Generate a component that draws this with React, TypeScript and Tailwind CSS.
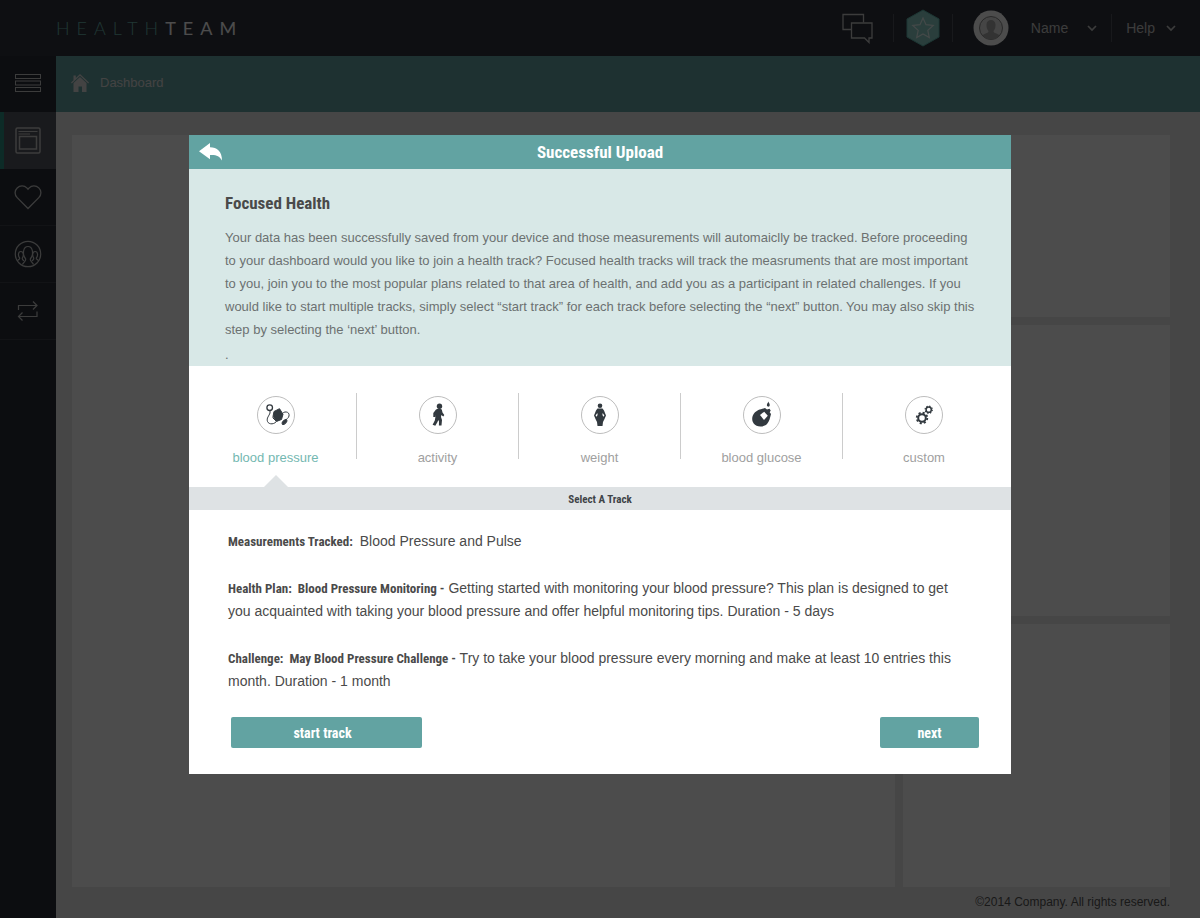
import React from 'react';

const condensed = "font-['Liberation_Sans_Narrow','Roboto_Condensed','Arial_Narrow','Liberation_Sans',sans-serif] font-bold";

const MenuIcon = () => (
  <svg width="26" height="19" viewBox="0 0 26 19" fill="none" stroke="currentColor">
    <rect x="0.5" y="0.5" width="25" height="4" />
    <rect x="0.5" y="7" width="25" height="4" />
    <rect x="0.5" y="13.5" width="25" height="4" />
  </svg>
);

const WindowIcon = () => (
  <svg width="26" height="27" viewBox="0 0 26 27" fill="none" stroke="currentColor">
    <rect x="1" y="1" width="24" height="25" rx="1.5" strokeWidth="1.5" />
    <path d="M3.5 4.5H22.5M3.5 7H15" />
    <rect x="4.5" y="9.5" width="17" height="12.5" strokeWidth="1.5" />
  </svg>
);

const HeartIcon = () => (
  <svg width="28" height="26" viewBox="0 0 28 26" fill="none" stroke="currentColor" strokeWidth="1.3">
    <path d="M14 24.5 3.2 13.6C.4 10.800.4 6.500 3.200 3.900 5.900 1.300 10.300 1.300 12.800 3.900L14 5.200 15.200 3.900C17.700 1.300 22.100 1.300 24.800 3.900 27.600 6.500 27.600 10.800 24.800 13.600Z" />
  </svg>
);

const PeopleIcon = () => (
  <svg width="28" height="28" viewBox="0 0 28 28" fill="none" stroke="currentColor" strokeWidth="1.200">
    <circle cx="14" cy="14" r="12.700" />
    <path d="M8.500 24.500C9.500 22 12 21.500 11.700 19 9.500 16.500 9.200 13 9.700 10.500 10.300 7.500 12 6.500 14 6.500S17.700 7.500 18.300 10.500C18.800 13 18.500 16.500 16.300 19 16 21.500 18.500 22 19.500 24.500" />
    <path d="M3.500 21C4 19.500 6 19.500 5.700 18 3.800 16 4 11.500 6.800 11.500 10 11.500 9.800 16 8.300 18 8 20 9.500 20 10 21M24.500 21C24 19.500 22 19.500 22.300 18 24.200 16 24 11.500 21.200 11.500 18 11.500 18.200 16 19.700 18 20 20 18.500 20 18 21" />
  </svg>
);

const RepeatIcon = () => (
  <svg width="22" height="22" viewBox="0 0 22 22" fill="none" stroke="currentColor" strokeWidth="1.200">
    <path d="M1.500 10V5.500H20M16 1.500 20 5.500 16 9.500M20 11.500V16.500H1.500M5.500 12.500 1.500 16.500 5.500 20.500" />
  </svg>
);

const ChatIcon = () => (
  <svg width="31" height="31" viewBox="0 0 31 31" fill="none" stroke="currentColor" strokeWidth="1.300">
    <path d="M9.500 16.500H1V1.500H21.500V9.500" />
    <path d="M9.500 10H30V25H27V29.500L22.500 25H9.500Z" />
  </svg>
);

const BadgeIcon = () => (
  <svg width="34" height="38" viewBox="0 0 34 38">
    <path d="M17 1 33 10V28L17 37 1 28V10Z" fill="#8ccfca" stroke="#5fb5ac" />
    <path d="m17 9 3 6.700 7.200.800-5.400 4.900 1.500 7.100L17 25l-6.300 3.500 1.500-7.100-5.400-4.900 7.200-.800Z" fill="none" stroke="#e4f4f2" strokeWidth="1.200" />
  </svg>
);

const Avatar = () => (
  <svg width="36" height="36" viewBox="0 0 36 36">
    <circle cx="18" cy="18" r="17.500" fill="#fff" />
    <circle cx="18" cy="18" r="11.500" fill="#e6e6e6" stroke="#8a8a8a" />
    <path d="M9.500 25.500C11 23.300 15.700 23.500 15.500 21 13.700 19.200 13.400 16.500 13.500 14.500 13.700 11.500 15.500 10 18 10S22.300 11.500 22.500 14.500C22.600 16.500 22.300 19.200 20.500 21 20.300 23.500 25 23.300 26.500 25.500A11 11 0 0 1 9.500 25.500Z" fill="#aaa" />
  </svg>
);

const Chevron = () => (
  <svg width="10" height="7" viewBox="0 0 10 7" fill="none" stroke="currentColor" strokeWidth="1.700">
    <path d="m1 1 4 4 4-4" />
  </svg>
);

const HomeIcon = () => (
  <svg width="18" height="18" viewBox="0 0 18 18" fill="currentColor">
    <path d="M9 0 18 8.600 17.200 9.400 9 1.700.8 9.400 0 8.600 2.500 6.200V1.500H4.800V4Z" />
    <path d="m9 2.900 6.500 6.100V18H11V12.500H7.500V18H2.500V9Z" />
  </svg>
);

const BackIcon = () => (
  <svg width="24" height="18" viewBox="0 0 24 18" fill="currentColor">
    <path d="M0 8.200 11 0V4.300C18 4.300 23 8.500 23 17.500 20.500 12.800 17 11.600 11 12V16.300Z" />
  </svg>
);

const PressureIcon = () => (
  <g fill="none" stroke="#32393f" strokeWidth="1">
    <circle cx="12.700" cy="11.700" r="2.800" strokeWidth="1.300" />
    <path d="M13 14.500V17C12 20 9.300 22 10.500 25.500 12 29 18 28.500 20 24.500M25 18.500C26 14.800 33 15 32 20 31.500 22.500 29.500 22.500 28.500 24.500" />
    <path d="m17 15.500 5.500-2.800 3.500 5.500-1.500 5.300-4.500 1.700-4-4.700Z" fill="#32393f" />
    <path d="M15.500 21.500 19.500 25.500" />
    <ellipse cx="27.500" cy="26" rx="3" ry="1.500" transform="rotate(-45 27.500 26)" fill="#32393f" />
  </g>
);

const WalkIcon = () => (
  <g fill="#32393f">
    <circle cx="20.500" cy="10.200" r="2.700" />
    <path d="M17 13.500 20 12.300 22.800 13.500 23.500 16.500 25.300 19 24.300 20.500 22.300 19 22 21 23 24 22.500 29.500H19.900L20 25.500 19.300 24 18.500 26 16.300 29.700 13.600 28.700 15.800 24.500 16.500 20.500 16.300 19V21H14.300V17Z" />
  </g>
);

const BodyIcon = () => (
  <g fill="#32393f">
    <circle cx="19" cy="9.800" r="2.300" />
    <path d="M16.500 12.500H21.500L23 14.500 25 19.500 23.500 23 22 26 21.500 30H16.500L16 26 14.500 23 13 19.500 15 14.500Z" />
    <path d="M16.300 17 14.600 19.500 15.500 20.700 16.600 19ZM21.700 17 23.400 19.500 22.500 20.700 21.400 19Z" fill="#fff" />
  </g>
);

const GlucoseIcon = () => (
  <g fill="#32393f">
    <path d="M25.300 5.500C26 7.300 27 8 26.700 9.600 26.200 11.200 24.300 11.200 23.900 9.600 23.700 8 24.800 7.300 25.300 5.500Z" />
    <path d="M11 17.500C14 14 17 13.500 22 12L24 13.500 26.500 12.700 27.700 14.500 26.700 16.200 28 18C27 22 26.500 25 24 28 20.500 31.500 13.500 31.500 10.700 27.500 8.500 24.500 8.800 20.500 11 17.500Z" />
    <path d="m17 19 4.200-3.300 3.600 4-3.800 4.300Z" fill="#fff" />
  </g>
);

const GearsIcon = () => (
  <g fill="none" stroke="#32393f">
    <circle cx="17" cy="22" r="3.800" strokeWidth="2" />
    <circle cx="17" cy="22" r="5.300" strokeWidth="1.800" strokeDasharray="2.100 2.060" />
    <circle cx="23.700" cy="13.700" r="2.600" strokeWidth="1.500" />
    <circle cx="23.700" cy="13.700" r="3.600" strokeWidth="1.200" strokeDasharray="1.400 1.430" />
  </g>
);

const sideItems = [
  { label: 'Dashboard', icon: WindowIcon, active: true },
  { label: 'Health', icon: HeartIcon, active: false },
  { label: 'Community', icon: PeopleIcon, active: false },
  { label: 'Sync', icon: RepeatIcon, active: false },
];

const tracks = [
  { label: 'blood pressure', icon: PressureIcon, active: true },
  { label: 'activity', icon: WalkIcon, active: false },
  { label: 'weight', icon: BodyIcon, active: false },
  { label: 'blood glucose', icon: GlucoseIcon, active: false },
  { label: 'custom', icon: GearsIcon, active: false },
];

const Header = () => (
  <header className="flex h-14 items-center justify-between bg-[#30343e] pr-6 pl-14 text-white">
    <a href="#" className="font-['Lato',sans-serif] text-lg leading-6 font-light tracking-[7px]">
      <span className="text-[#6bb5ad]">HEALTH</span><span className="font-normal">TEAM</span>
    </a>
    <div className="flex h-full items-center text-sm text-[#c8c8c8]">
      <button aria-label="Messages" className="mr-5"><ChatIcon /></button>
      <span className="h-7 w-px bg-[#50545e]" />
      <button aria-label="Rewards" className="mx-3"><BadgeIcon /></button>
      <span className="h-7 w-px bg-[#50545e]" />
      <button className="ml-5 flex items-center">
        <Avatar />
        <span className="mr-[19px] ml-[22px]">Name</span>
        <Chevron />
      </button>
      <span className="mx-3.5 h-7 w-px bg-[#50545e]" />
      <button className="flex items-center gap-[11px]">
        Help
        <Chevron />
      </button>
    </div>
  </header>
);

const Sidebar = () => (
  <nav className="flex w-14 shrink-0 flex-col bg-[#2a2e38] text-[#c8c8c8]">
    <button aria-label="Menu" className="flex h-14 items-center justify-center pb-0.5"><MenuIcon /></button>
    {sideItems.map((item) => (
      <a
        key={item.label}
        href="#"
        aria-label={item.label}
        className={
          item.active
            ? 'flex h-[57px] items-center justify-center border-l-4 border-[#2d9083] bg-[#565961] pr-1'
            : 'flex h-[57px] items-center justify-center border-b border-[#3c404a]'
        }
      >
        <item.icon />
      </a>
    ))}
  </nav>
);

const UploadModal = () => (
  <section role="dialog" aria-modal="true" aria-labelledby="upload-title" className="w-full max-w-[822px] bg-white">
    <div className="grid h-[34px] grid-cols-3 items-center bg-[#62a3a2] px-2.5 text-white">
      <button aria-label="Back" className="justify-self-start"><BackIcon /></button>
      <h1 id="upload-title" className={`${condensed} text-center text-[17px] leading-6`}>Successful Upload</h1>
    </div>

    <div className="bg-[#d8e8e7] pt-[22px] pr-3 pl-9 text-[13px] leading-[23px] text-[#6c7171]">
      <h2 className={`${condensed} mb-[11px] text-[17px] leading-6 text-[#4a4a4a]`}>Focused Health</h2>
      <p>
        Your data has been successfully saved from your device and those measurements will automaiclly be tracked. Before proceeding<br />
        to your dashboard would you like to join a health track? Focused health tracks will track the measruments that are most important<br />
        to you, join you to the most popular plans related to that area of health, and add you as a participant in related challenges. If you<br />
        would like to start multiple tracks, simply select “start track” for each track before selecting the “next” button. You may also skip this<br />
        step by selecting the ‘next’ button.
      </p>
      <p className="mt-0.5">.</p>
    </div>

    <div role="tablist" className="flex h-[121px] px-1.5 pt-[27px]">
      {tracks.map((track, i) => (
        <div key={track.label} className="flex flex-1 items-start">
          <button
            role="tab"
            aria-selected={track.active}
            className="relative flex h-full flex-1 flex-col items-center gap-4 pt-[3px] text-[13px] leading-4"
          >
            <svg width="38" height="38" viewBox="0 0 38 38">
              <circle cx="19" cy="19" r="18.500" fill="#fff" stroke="#bdbdbd" />
              <track.icon />
            </svg>
            <span className={track.active ? 'text-[#74b8b1]' : 'text-[#a0a0a0]'}>{track.label}</span>
            {track.active && (
              <span className="absolute bottom-0 border-x-[12px] border-b-[12px] border-x-transparent border-b-[#dee2e4]" />
            )}
          </button>
          {i < tracks.length - 1 && <span className="h-[66px] w-px bg-[#ccc]" />}
        </div>
      ))}
    </div>

    <h3 className={`${condensed} h-[23px] bg-[#dee2e4] text-center text-[11px] leading-[25px] text-[#3f4448]`}>Select A Track</h3>

    <div className="px-8 pt-5 pb-[26px] text-sm leading-[23px] text-[#4a4a4a]">
      <div className="flex flex-col gap-6 pl-[7px]">
        <p>
          <strong className={`${condensed} text-[13px] leading-[22px]`}>Measurements Tracked:&nbsp;</strong> Blood Pressure and Pulse
        </p>
        <p>
          <strong className={`${condensed} text-[13px] leading-[22px]`}>Health Plan:&nbsp; Blood Pressure Monitoring -</strong> Getting started with monitoring your blood pressure? This plan is designed to get<br />
          you acquainted with taking your blood pressure and offer helpful monitoring tips. Duration - 5 days
        </p>
        <p>
          <strong className={`${condensed} text-[13px] leading-[22px]`}>Challenge:&nbsp; May Blood Pressure Challenge -</strong> Try to take your blood pressure every morning and make at least 10 entries this<br />
          month. Duration - 1 month
        </p>
      </div>
      <div className="mt-6 flex justify-between pl-2.5">
        <button className={`${condensed} h-[31px] w-[191px] rounded-xs bg-[#62a3a2] pr-2 text-sm text-white`}>start track</button>
        <button className={`${condensed} h-[31px] w-[99px] rounded-xs bg-[#62a3a2] text-sm text-white`}>next</button>
      </div>
    </div>
  </section>
);

export default function App() {
  return (
    <div className="relative flex min-h-screen flex-col bg-[#ebebeb] font-['Liberation_Sans',Arial,sans-serif]">
      <Header />
      <div className="flex flex-1">
        <Sidebar />
        <div className="flex flex-1 flex-col">
          <div className="flex h-14 items-center gap-[11px] bg-[#67a3a3] px-[15px] pb-0.5 text-[13px] text-[#e0e0e0]">
            <HomeIcon />
            <a href="#">Dashboard</a>
          </div>
          <main className="flex flex-1 gap-2 pt-[23px] pr-[30px] pl-4">
            <div className="flex-1 bg-white" />
            <div className="flex w-[267px] flex-col gap-2">
              <div className="h-[182px] bg-white" />
              <div className="h-[291px] bg-white" />
              <div className="flex-1 bg-white" />
            </div>
          </main>
          <footer className="pr-[30px] text-right text-xs leading-[31px] text-[#555]">
            ©2014 Company. All rights reserved.
          </footer>
        </div>
      </div>

      <div className="absolute inset-0 flex items-start justify-center bg-black/70 pt-[135px]">
        <UploadModal />
      </div>
    </div>
  );
}
